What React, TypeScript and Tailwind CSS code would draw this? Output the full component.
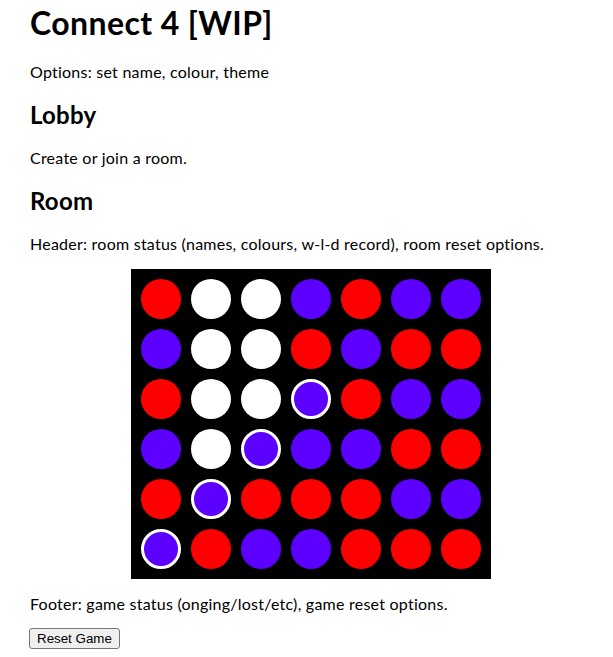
const R = "r";
const W = "w";
const P = "p";
const H = "h"; // purple, part of the winning line

const board: string[][] = [
  [R, W, W, P, R, P, P],
  [P, W, W, R, P, R, R],
  [R, W, W, H, R, P, P],
  [P, W, H, P, P, R, R],
  [R, H, R, R, R, P, P],
  [H, R, P, P, R, R, R],
];

function Cell({ v }: { v: string }) {
  if (v === R) return <div className="w-10 h-10 rounded-full bg-[#ff0000]" />;
  if (v === W) return <div className="w-10 h-10 rounded-full bg-white" />;
  if (v === H)
    return <div className="w-10 h-10 rounded-full bg-[#5c00ff] border-[3px] border-white" />;
  return <div className="w-10 h-10 rounded-full bg-[#5c00ff]" />;
}

export default function App() {
  return (
    <div className="min-h-screen bg-white text-black px-[30px] font-['Lato','Noto_Sans',sans-serif] tracking-[0.24px]">
      <h1 className="text-[32px] leading-[36.8px] font-bold pt-[5px] mb-[21px] tracking-[0.4px]">Connect 4 [WIP]</h1>
      <p className="text-base leading-[18.4px] mb-[20px]">Options: set name, colour, theme</p>

      <h2 className="text-2xl leading-[27.6px] font-bold mb-[20px]">Lobby</h2>
      <p className="text-base leading-[18.4px] mb-[20px]">Create or join a room.</p>

      <h2 className="text-2xl leading-[27.6px] font-bold mb-[20px]">Room</h2>
      <p className="text-base leading-[18.4px] mb-4">
        Header: room status (names, colours, w-l-d record), room reset options.
      </p>

      <div className="flex justify-center pl-[9px]">
        <div className="bg-black p-[10px] grid grid-cols-7 gap-[10px]">
          {board.flat().map((v, i) => (
            <Cell key={i} v={v} />
          ))}
        </div>
      </div>

      <p className="text-base leading-[18.4px] mt-4 mb-[11px]">
        Footer: game status (onging/lost/etc), game reset options.
      </p>
      <button className="-ml-px h-[21px] px-[7px] text-[13.33px] leading-none tracking-normal font-['Liberation_Sans',Arial,sans-serif] bg-[#efefef] border border-[#767676] rounded-[3px]">
        Reset Game
      </button>
    </div>
  );
}
